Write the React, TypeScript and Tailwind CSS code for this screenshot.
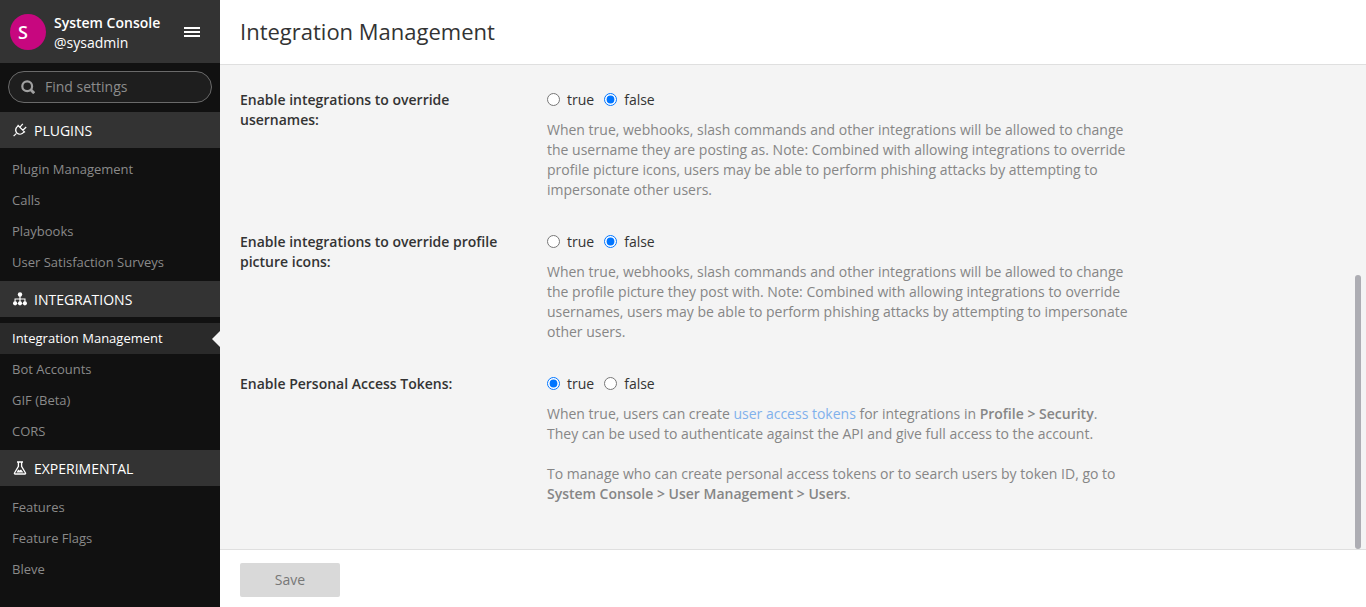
import { useState, type ReactNode } from 'react';

type Section = { title: string; icon: ReactNode; items: string[] };

const PlugIcon = () => (
  <svg viewBox="0 0 14 14" className="size-[14px]" fill="none" stroke="currentColor" strokeWidth="1.2" aria-hidden="true">
    <path d="M0.6 13.2 3.2 10.6M4.6 2 12 9.4M5.2 2.8 3.4 4.6Q1.8 7.2 3.6 9.8 6.4 12.2 9.2 10.6L11.2 8.8M7 4.2 9.8 0.8M9.8 7.2 13.2 4" />
  </svg>
);

const SitemapIcon = () => (
  <svg viewBox="0 0 14 14" className="size-[14px]" fill="currentColor" aria-hidden="true">
    <circle cx="7" cy="2.5" r="2.2" />
    <path d="M6.4 4h1.2v2.4h4.9v4h-1.1V7.6H7.6v3H6.4v-3H2.6v2.8H1.5v-4h4.9z" />
    <circle cx="2.1" cy="11.3" r="2.1" />
    <circle cx="7" cy="11.3" r="2.1" />
    <circle cx="11.9" cy="11.3" r="2.1" />
  </svg>
);

const FlaskIcon = () => (
  <svg viewBox="0 0 14 14" className="size-[14px]" fill="none" stroke="currentColor" strokeWidth="1.3" strokeLinejoin="round" aria-hidden="true">
    <path d="M4 1h6M5.4 1v4.4L1.5 12q-.4 1 .6 1h9.8q1 0 .6-1L8.6 5.4V1" />
    <path d="M3.5 11.5 5.2 8.4 6.4 9.4 8 8.4 10.5 11.5z" fill="currentColor" stroke="none" />
  </svg>
);

const sections: Section[] = [
  { title: 'PLUGINS', icon: <PlugIcon />, items: ['Plugin Management', 'Calls', 'Playbooks', 'User Satisfaction Surveys'] },
  { title: 'INTEGRATIONS', icon: <SitemapIcon />, items: ['Integration Management', 'Bot Accounts', 'GIF (Beta)', 'CORS'] },
  { title: 'EXPERIMENTAL', icon: <FlaskIcon />, items: ['Features', 'Feature Flags', 'Bleve'] },
];

function Sidebar() {
  const active = 'Integration Management';
  return (
    <aside className="flex w-[220px] shrink-0 flex-col bg-[#111111]">
      <header className="flex h-[63px] items-center bg-[#333333] pr-5 pl-[10px] text-white">
        <span className="flex size-9 items-center justify-center rounded-full bg-[#c7077f] pr-[10px] text-lg font-semibold">S</span>
        <div className="ml-2 flex-1 pt-[2px] text-sm leading-5">
          <div className="font-semibold">System Console</div>
          <div>@sysadmin</div>
        </div>
        <button type="button" aria-label="Menu" className="flex">
          <svg viewBox="0 0 16 10" className="h-[10px] w-4" fill="currentColor" aria-hidden="true">
            <path d="M0 0h16v2H0zM0 4h16v2H0zM0 8h16v2H0z" />
          </svg>
        </button>
      </header>
      <div className="px-2 pt-2 pb-[9px]">
        <label className="flex h-8 items-center gap-[10px] rounded-full border border-[#6a6a6a] bg-[#1e1e1e] px-3">
          <svg viewBox="0 0 14 14" className="size-[14px] shrink-0 text-[#a0a0a0]" fill="none" stroke="currentColor" strokeWidth="2.2" aria-hidden="true">
            <circle cx="6.2" cy="6.2" r="4.9" />
            <path d="M9.5 9.5 13.2 13.2" strokeWidth="2.8" />
          </svg>
          <input
            type="text"
            aria-label="Find settings"
            placeholder="Find settings"
            className="w-full min-w-0 bg-transparent text-sm text-white outline-none placeholder:text-[#8c8c8c]"
          />
        </label>
      </div>
      <nav>
        {sections.map((s) => (
          <section key={s.title}>
            <h2 className="flex h-9 items-center gap-[7px] bg-[#333333] px-[13px] text-sm text-white">
              {s.icon}
              <span className="pt-[2px]">{s.title}</span>
            </h2>
            <ul className="pt-[6px] pb-[3px]">
              {s.items.map((item) => (
                <li key={item}>
                  <a
                    href="#"
                    className={
                      item === active
                        ? 'relative flex h-[31px] items-center bg-[#2a2a2a] px-3 text-[13px] text-white'
                        : 'flex h-[31px] items-center px-3 text-[13px] text-[#8a8a8a]'
                    }
                  >
                    {item}
                    {item === active && (
                      <svg viewBox="0 0 8 16" className="absolute right-0 h-4 w-2" fill="#f4f4f4" aria-hidden="true">
                        <path d="M8 0v16L0 8z" />
                      </svg>
                    )}
                  </a>
                </li>
              ))}
            </ul>
          </section>
        ))}
      </nav>
    </aside>
  );
}

function Setting({ name, label, initial, children }: { name: string; label: string; initial: boolean; children: ReactNode }) {
  const [value, setValue] = useState(initial);
  return (
    <div role="radiogroup" aria-labelledby={name} className="grid grid-cols-[277px_1fr] gap-[30px]">
      <div id={name} className="font-semibold">{label}</div>
      <div>
        <div className="flex gap-[10px]">
          {[true, false].map((v) => (
            <label key={String(v)} className="flex items-start gap-[7px]">
              <input type="radio" name={name} checked={value === v} onChange={() => setValue(v)} className="mt-[3px] size-[13px]" />
              {String(v)}
            </label>
          ))}
        </div>
        <div className="mt-[10px] text-[#868686]">{children}</div>
      </div>
    </div>
  );
}

export default function App() {
  return (
    <div className="flex h-screen font-['Open_Sans',sans-serif] text-[#333333]">
      <Sidebar />
      <main className="flex min-w-0 flex-1 flex-col bg-[#f4f4f4]">
        <header className="flex h-[65px] shrink-0 items-center border-b border-[#dfdfdf] bg-white px-5 pb-[2px]">
          <h1 className="text-[22px]">Integration Management</h1>
        </header>
        <div className="relative min-h-0 flex-1">
          <form className="flex h-full max-w-[931px] flex-col gap-8 overflow-hidden px-5 pt-[25px] text-sm leading-5">
            <Setting name="override-usernames" label="Enable integrations to override usernames:" initial={false}>
              When true, webhooks, slash commands and other integrations will be allowed to change the username they are
              posting as. Note: Combined with allowing integrations to override profile picture icons, users may be able
              to perform phishing attacks by attempting to impersonate other users.
            </Setting>
            <Setting name="override-icons" label="Enable integrations to override profile picture icons:" initial={false}>
              When true, webhooks, slash commands and other integrations will be allowed to change the profile picture
              they post with. Note: Combined with allowing integrations to override usernames, users may be able to
              perform phishing attacks by attempting to impersonate other users.
            </Setting>
            <Setting name="access-tokens" label="Enable Personal Access Tokens:" initial={true}>
              <p>
                When true, users can create <a href="#" className="text-[#81b1ec]">user access tokens</a> for
                integrations in <strong className="font-semibold">Profile &gt; Security</strong>.
              </p>
              <p>They can be used to authenticate against the API and give full access to the account.</p>
              <p className="mt-5">
                To manage who can create personal access tokens or to search users by token ID, go to{' '}
                <strong className="font-semibold">System Console &gt; User Management &gt; Users</strong>.
              </p>
            </Setting>
          </form>
          <div className="absolute right-[5px] bottom-0 h-[274px] w-[6px] rounded-full bg-[#adadb3]" />
        </div>
        <footer className="flex h-[58px] shrink-0 items-center border-t border-[#dfdfdf] bg-white px-5 pt-[2px]">
          <button type="button" disabled className="h-[34px] w-[100px] rounded-xs bg-[#d9d9d9] text-sm text-[#777777]">
            Save
          </button>
        </footer>
      </main>
    </div>
  );
}
